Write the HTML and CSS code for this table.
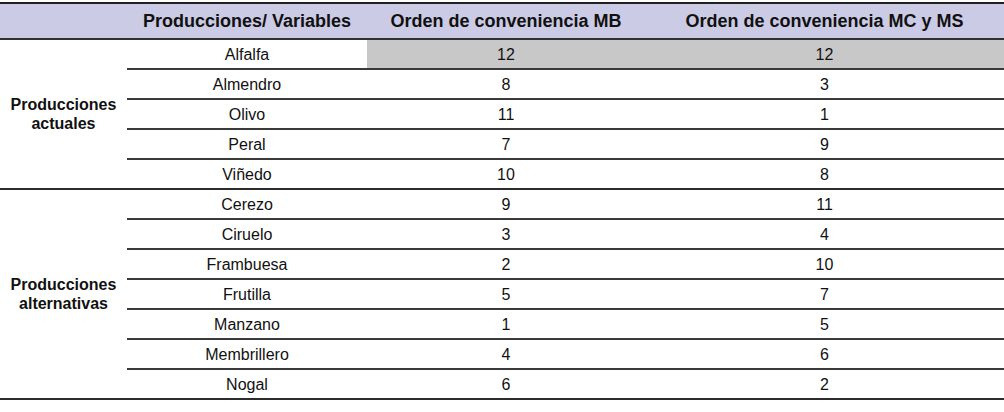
FILE: index.html
```html
<!DOCTYPE html>
<html lang="es">
<head>
<meta charset="utf-8">
<link rel="stylesheet" href="styles.css">
</head>
<body>
<table class="grid">
  <colgroup>
    <col class="c-group">
    <col class="c-name">
    <col class="c-mb">
    <col class="c-mc">
  </colgroup>
  <thead>
    <tr>
      <th></th>
      <th>Producciones/ Variables</th>
      <th>Orden de conveniencia MB</th>
      <th>Orden de conveniencia MC y MS</th>
    </tr>
  </thead>
  <tbody class="group">
    <tr><th class="label" rowspan="5">Producciones<br>actuales</th><td>Alfalfa</td><td class="hl">12</td><td class="hl">12</td></tr>
    <tr><td>Almendro</td><td>8</td><td>3</td></tr>
    <tr><td>Olivo</td><td>11</td><td>1</td></tr>
    <tr><td>Peral</td><td>7</td><td>9</td></tr>
    <tr><td>Viñedo</td><td>10</td><td>8</td></tr>
  </tbody>
  <tbody class="group">
    <tr><th class="label" rowspan="7">Producciones<br>alternativas</th><td>Cerezo</td><td>9</td><td>11</td></tr>
    <tr><td>Ciruelo</td><td>3</td><td>4</td></tr>
    <tr><td>Frambuesa</td><td>2</td><td>10</td></tr>
    <tr><td>Frutilla</td><td>5</td><td>7</td></tr>
    <tr><td>Manzano</td><td>1</td><td>5</td></tr>
    <tr><td>Membrillero</td><td>4</td><td>6</td></tr>
    <tr><td>Nogal</td><td>6</td><td>2</td></tr>
  </tbody>
</table>
</body>
</html>
```
FILE: styles.css
```css
html, body {
  margin: 0;
  padding: 0;
  background: #ffffff;
}
body {
  padding-top: 2px;
  font-family: "Liberation Sans", Arial, sans-serif;
  color: #111111;
}
.grid {
  border-collapse: collapse;
  width: 1004px;
  table-layout: fixed;
}
.c-group { width: 127px; }
.c-name { width: 240px; }
.c-mb { width: 278px; }
.c-mc { width: 359px; }

.grid thead th {
  background: #cccbe5;
  height: 34px;
  padding: 0;
  font-size: 18px;
  font-weight: bold;
  text-align: center;
  border-top: 2px solid #202020;
  border-bottom: 2px solid #303030;
}
.grid td {
  height: 26px;
  padding: 2px 0 0;
  font-size: 16px;
  text-align: center;
  border-top: 2px solid #3a3a3a;
}
.grid tbody tr:first-child td { border-top: 0; }
.grid tbody.group { border-top: 2px solid #2c2c2c; }
.grid tbody.group:last-child { border-bottom: 2px solid #2c2c2c; }
.grid tbody.group:first-of-type { border-top: 0; }
.label {
  font-size: 16px;
  font-weight: bold;
  text-align: center;
  padding: 0;
  line-height: 19px;
}
.hl { background: #c8c8c8; }
```
